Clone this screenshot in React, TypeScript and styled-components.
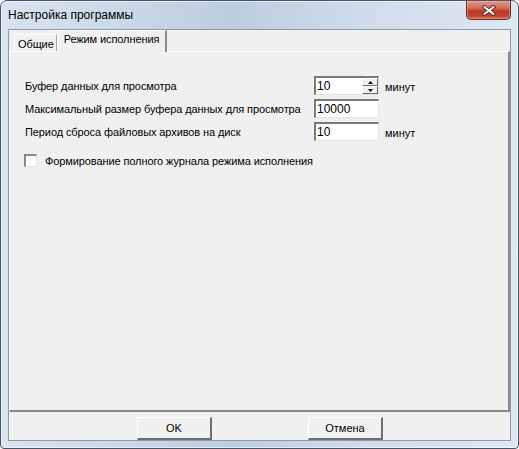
import React from "react";
import styled, { createGlobalStyle } from "styled-components";

const GlobalStyle = createGlobalStyle`
  body {
    margin: 0;
    background: #ffffff;
    font-family: "Liberation Sans", Arial, sans-serif;
    font-size: 11px;
    color: #000;
  }
`;

const Window = styled.div`
  box-sizing: border-box;
  width: 519px;
  height: 449px;
  display: flex;
  flex-direction: column;
  padding: 0 7px 7px 7px;
  border: 1px solid #4a5565;
  border-radius: 7px 7px 4px 4px;
  background: linear-gradient(
      90deg,
      #d9e4f1 0%,
      #cbd9e8 22%,
      #bccde0 45%,
      #d0dceb 70%,
      #dee8f3 100%
    );
  box-shadow: inset 0 0 0 1px rgba(255, 255, 255, 0.55);
`;

const TitleBar = styled.div`
  height: 28px;
  display: flex;
  align-items: flex-start;
  justify-content: space-between;
`;

const Title = styled.div`
  padding-top: 7px;
  font-family: "Liberation Sans", Arial, sans-serif;
  font-size: 12px;
  color: #000;
`;

const CloseButton = styled.div`
  width: 45px;
  height: 19px;
  display: flex;
  align-items: center;
  justify-content: center;
  box-sizing: border-box;
  border: 1px solid #6b2a22;
  border-top: none;
  border-radius: 0 0 5px 5px;
  background: linear-gradient(
    180deg,
    #e3998a 0%,
    #d06a58 40%,
    #bd3a26 55%,
    #c2432d 80%,
    #d26a55 100%
  );
  box-shadow: inset 0 0 0 1px rgba(255, 200, 190, 0.4);
`;

const Client = styled.div`
  flex: 1;
  display: flex;
  flex-direction: column;
  background: #f0f0f0;
  border: 1px solid #8c9aab;
`;

const TabStrip = styled.div`
  height: 21px;
  display: flex;
  align-items: flex-end;
  padding-left: 5px;
`;

const Tab = styled.div<{ $active?: boolean }>`
  box-sizing: border-box;
  height: ${(p) => (p.$active ? 22 : 17)}px;
  padding: ${(p) => (p.$active ? "2px 6px 0 6px" : "1px 2px 0 3px")};
  display: flex;
  align-items: ${(p) => (p.$active ? "flex-start" : "center")};
  border-top: 1px solid #ffffff;
  border-left: 1px solid #ffffff;
  border-right: ${(p) => (p.$active ? "2px solid #8a8a8a" : "1px solid #a0a0a0")};
  background: #f0f0f0;
  position: relative;
  z-index: ${(p) => (p.$active ? 2 : 1)};
  margin-bottom: ${(p) => (p.$active ? "-1px" : "0")};
  font-size: 11px;
  letter-spacing: -0.1px;
`;

const Panel = styled.div`
  flex: 1;
  box-sizing: border-box;
  border-top: 1px solid #ffffff;
  border-left: 1px solid #ffffff;
  border-right: 2px solid #8a8a8a;
  border-bottom: 2px solid #8a8a8a;
  padding: 24px 0 0 15px;
`;

const Fields = styled.div`
  display: grid;
  grid-template-columns: 283px 65px auto;
  column-gap: 6px;
  row-gap: 4px;
  align-items: center;
`;

const Label = styled.div`
  font-size: 11px;
  white-space: nowrap;
  letter-spacing: -0.1px;
`;

const Unit = styled.div`
  font-size: 11px;
  padding-top: 2px;
`;

const Edit = styled.div`
  box-sizing: border-box;
  height: 19px;
  display: flex;
  align-items: center;
  background: #ffffff;
  border-top: 2px solid #7a7a7a;
  border-left: 2px solid #7a7a7a;
  border-right: 1px solid #e3e3e3;
  border-bottom: 1px solid #e3e3e3;
  padding-left: 1px;
  font-size: 12px;
`;

const EditValue = styled.span`
  flex: 1;
`;

const Spin = styled.div`
  display: flex;
  flex-direction: column;
  width: 16px;
  height: 16px;
`;

const SpinButton = styled.div`
  box-sizing: border-box;
  flex: 1;
  display: flex;
  align-items: center;
  justify-content: center;
  background: #f0f0f0;
  border-top: 1px solid #ffffff;
  border-left: 1px solid #ffffff;
  border-right: 1px solid #696969;
  border-bottom: 1px solid #696969;
`;

const CheckRow = styled.div`
  display: flex;
  align-items: center;
  gap: 8px;
  margin-top: 13px;
  margin-left: -1px;
`;

const CheckBox = styled.div`
  box-sizing: border-box;
  width: 13px;
  height: 13px;
  background: #ffffff;
  border-top: 2px solid #8a8a8a;
  border-left: 2px solid #8a8a8a;
  border-right: 1px solid #e3e3e3;
  border-bottom: 1px solid #e3e3e3;
`;

const ButtonBar = styled.div`
  height: 28px;
  display: flex;
  justify-content: center;
  align-items: flex-end;
  gap: 96px;
  padding-left: 1px;
`;

const Button = styled.div`
  box-sizing: border-box;
  width: 75px;
  height: 23px;
  display: flex;
  align-items: center;
  justify-content: center;
  background: #f0f0f0;
  border-top: 1px solid #ffffff;
  border-left: 1px solid #ffffff;
  border-right: 2px solid #6e6e6e;
  border-bottom: 2px solid #6e6e6e;
  font-size: 11px;
`;

const Arrow = ({ up }: { up?: boolean }) => (
  <svg width="5" height="3" viewBox="0 0 5 3">
    <path d={up ? "M2.5 0 L5 3 L0 3 Z" : "M0 0 L5 0 L2.5 3 Z"} fill="#000" />
  </svg>
);

const CloseGlyph = () => (
  <svg width="14" height="11" viewBox="0 0 14 11">
    <path
      d="M2.5 2 L11.5 9 M11.5 2 L2.5 9"
      stroke="#5a2a25"
      strokeWidth="3.8"
      strokeLinecap="square"
    />
    <path
      d="M2.5 2 L11.5 9 M11.5 2 L2.5 9"
      stroke="#ffffff"
      strokeWidth="1.9"
      strokeLinecap="square"
    />
  </svg>
);

export default function App() {
  return (
    <>
      <GlobalStyle />
      <Window>
        <TitleBar>
          <Title>Настройка программы</Title>
          <CloseButton>
            <CloseGlyph />
          </CloseButton>
        </TitleBar>
        <Client>
          <TabStrip>
            <Tab>Общие</Tab>
            <Tab $active>Режим исполнения</Tab>
          </TabStrip>
          <Panel>
            <Fields>
              <Label>Буфер данных для просмотра</Label>
              <Edit>
                <EditValue>10</EditValue>
                <Spin>
                  <SpinButton>
                    <Arrow up />
                  </SpinButton>
                  <SpinButton>
                    <Arrow />
                  </SpinButton>
                </Spin>
              </Edit>
              <Unit>минут</Unit>

              <Label>Максимальный размер буфера данных для просмотра</Label>
              <Edit>
                <EditValue>10000</EditValue>
              </Edit>
              <span />

              <Label>Период сброса файловых архивов на диск</Label>
              <Edit>
                <EditValue>10</EditValue>
              </Edit>
              <Unit>минут</Unit>
            </Fields>
            <CheckRow>
              <CheckBox />
              <Label>Формирование полного журнала режима исполнения</Label>
            </CheckRow>
          </Panel>
          <ButtonBar>
            <Button>OK</Button>
            <Button>Отмена</Button>
          </ButtonBar>
        </Client>
      </Window>
    </>
  );
}
